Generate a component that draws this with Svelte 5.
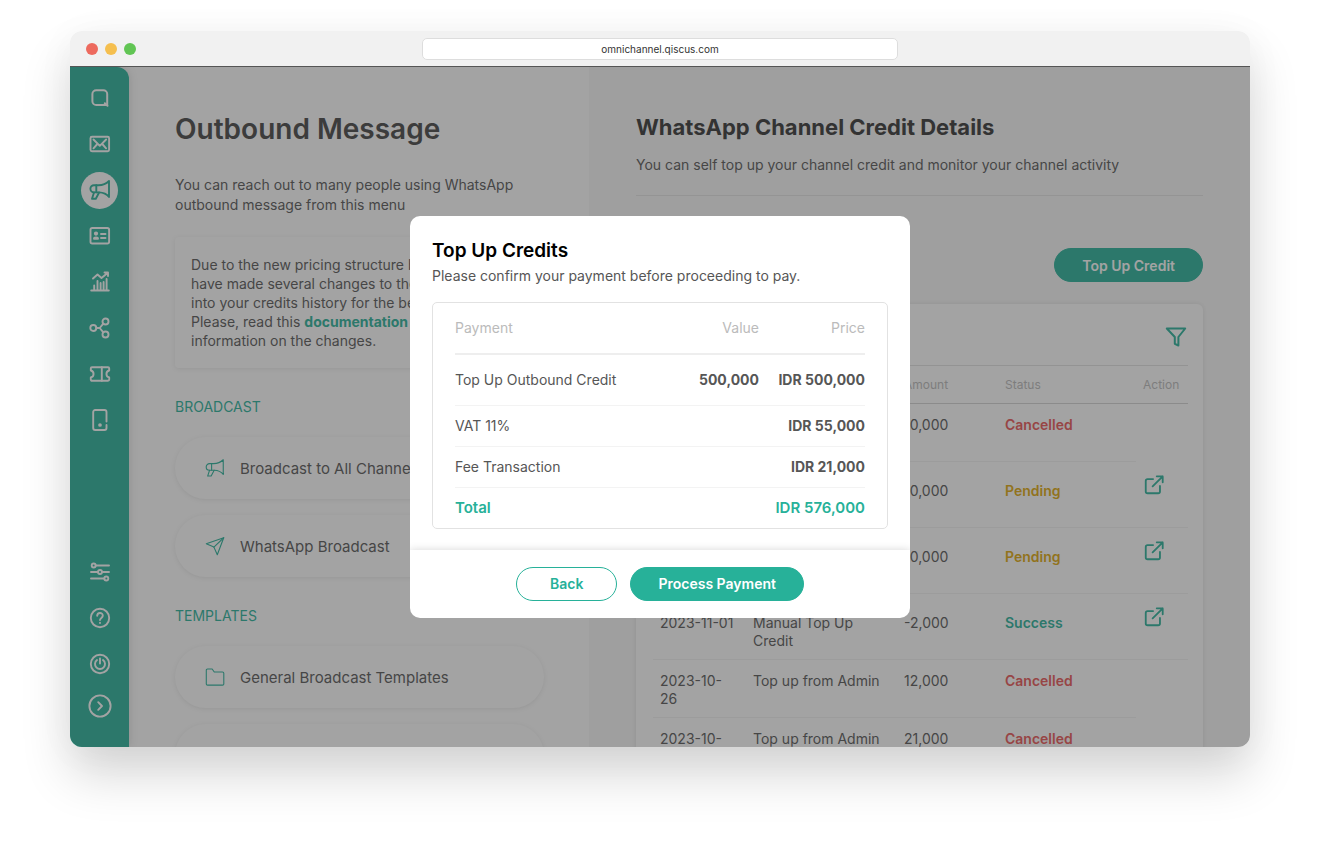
<script lang="ts">
	type Row = { date: string; type: string; amount: string; status: string; link: boolean };

	const topNav = ['logo', 'mail', 'horn', 'contact', 'chart', 'share', 'ticket', 'device'];
	const bottomNav = ['sliders', 'help', 'power', 'next'];

	const labels: Record<string, string> = {
		logo: 'Home',
		mail: 'Inbox',
		horn: 'Outbound message',
		contact: 'Contacts',
		chart: 'Analytics',
		share: 'Integration',
		ticket: 'Tickets',
		device: 'Devices',
		sliders: 'Settings',
		help: 'Help',
		power: 'Log out',
		next: 'Expand'
	};

	const rows: Row[] = [
		{ date: '2023-11-05', type: 'Top Up', amount: '10,000', status: 'Cancelled', link: false },
		{ date: '2023-11-03', type: 'Top Up', amount: '10,000', status: 'Pending', link: true },
		{ date: '2023-11-02', type: 'Top Up', amount: '10,000', status: 'Pending', link: true },
		{ date: '2023-11-01', type: 'Manual Top Up Credit', amount: '-2,000', status: 'Success', link: true },
		{ date: '2023-10-26', type: 'Top up from Admin', amount: '12,000', status: 'Cancelled', link: false },
		{ date: '2023-10-25', type: 'Top up from Admin', amount: '21,000', status: 'Cancelled', link: false }
	];

	const payments = [
		{ name: 'Top Up Outbound Credit', value: '500,000', price: 'IDR 500,000' },
		{ name: 'VAT 11%', value: '', price: 'IDR 55,000' },
		{ name: 'Fee Transaction', value: '', price: 'IDR 21,000' }
	];
</script>

{#snippet icon(name: string, size = 24, stroke = 1.9)}
	<svg
		width={size}
		height={size}
		viewBox="0 0 24 24"
		fill="none"
		stroke="currentColor"
		stroke-width={stroke}
		stroke-linecap="round"
		stroke-linejoin="round"
		aria-hidden="true"
	>
		{#if name === 'logo'}
			<path d="M8.200 4.300h7.200a3.800 3.800 0 0 1 3.800 3.800v10.900H8.200a3.800 3.800 0 0 1-3.800-3.800V8.100a3.800 3.800 0 0 1 3.800-3.800z" stroke-width="2" />
			<path d="M16.800 17.200l2.700 2.500" stroke-width="2" />
		{:else if name === 'mail'}
			<rect x="2.500" y="4.700" width="18.600" height="14.600" rx="1.5" />
			<path d="M5.500 7.500l6.300 6.300 6.300-6.300M5.500 16.300l3.400-3.800M18.100 16.300l-3.400-3.800" />
		{:else if name === 'horn'}
			<path d="M21 3v16c-3-3.8-6.400-4.500-9.800-4.600H6a3.200 3.200 0 0 1 0-7.200h4.500C14.500 7.200 18 6 21 3z" />
			<path d="M8.300 7.300v7M6 14.500L4 20.800h3.800l3.300-6.300" />
		{:else if name === 'contact'}
			<rect x="2.500" y="4" width="18.600" height="15.500" rx="1.800" />
			<circle cx="8" cy="9.600" r="1.200" fill="currentColor" />
			<path d="M6 14.800c0-1.800 4-1.800 4 0z" fill="currentColor" />
			<path d="M13 10h4.500M13 14h4.500" />
		{:else if name === 'chart'}
			<path d="M3.200 20.500h17.600M6.200 20v-4.500M9.500 20v-9M12.600 20v-7M15.600 20v-8M18.600 20V9" />
			<path d="M5 8.500l4.500-4 4 3.500 6-5M16.500 2.500H20V6" />
		{:else if name === 'share'}
			<circle cx="5.300" cy="12" r="3" />
			<circle cx="17.500" cy="5.500" r="3" />
			<circle cx="17.500" cy="18.500" r="3" />
			<path d="M8.300 12h3.400l3.600-4.300M11.700 12l3.600 4.300" />
		{:else if name === 'ticket'}
			<path d="M4 5.200h16c.7 0 1.200.5 1.200 1.200v2.100a3.600 3.600 0 0 0 0 7v2.100c0 .7-.5 1.200-1.200 1.200H4c-.7 0-1.200-.5-1.200-1.200v-2.100a3.600 3.600 0 0 0 0-7V6.400c0-.7.5-1.200 1.200-1.200z" />
			<path d="M13.800 5.200v13.600" />
		{:else if name === 'device'}
			<path d="M18.500 13.500V4a2 2 0 0 0-2-2H7.200a2 2 0 0 0-2 2v16a2 2 0 0 0 2 2h9.300a2 2 0 0 0 2-2v-3" />
			<circle cx="12" cy="17" r=".9" fill="currentColor" />
		{:else if name === 'sliders'}
			<circle cx="5.700" cy="5.500" r="2" />
			<circle cx="12" cy="12" r="2" />
			<circle cx="18.300" cy="18.500" r="2" />
			<path d="M7.700 5.500H21M3 12h7M14 12h7M3 18.500h13.300" />
		{:else if name === 'help'}
			<circle cx="12" cy="12" r="9.200" />
			<path d="M9.200 9.800c0-3.800 5.600-3.800 5.600 0 0 2-2.800 2.200-2.800 4.200M12 16.800v.2" />
		{:else if name === 'power'}
			<circle cx="12" cy="12" r="9.200" />
			<path d="M12 6.500v5M9 8a5 5 0 1 0 6 0" />
		{:else if name === 'next'}
			<circle cx="12" cy="12" r="10.600" />
			<path d="M10.200 8.200L14 12l-3.800 3.800" />
		{:else if name === 'plane'}
			<path d="M2.500 9.500L21.500 3l-7 18.500-3.700-8.300z" />
			<path d="M10.800 13.200L21.500 3" />
		{:else if name === 'folder'}
			<path d="M2.500 4.700c0-.8.500-1.400 1.400-1.400h5l2.300 3.200h9c.8 0 1.400.5 1.400 1.400v11.600c0 .8-.6 1.400-1.400 1.400H3.900c-.9 0-1.400-.6-1.400-1.400z" />
		{:else if name === 'filter'}
			<path d="M2.800 3.500h18.400l-6.800 8.500v8.500l-3.600-1.700V12z" />
		{:else if name === 'open'}
			<path d="M11 5.500H5a2 2 0 0 0-2 2V19a2 2 0 0 0 2 2h11.500a2 2 0 0 0 2-2v-6" />
			<path d="M10.500 13.500L21.500 2.500M15 2.500h6.500V9" />
		{/if}
	</svg>
{/snippet}

<div class="page">
	<div class="window">
		<div class="chrome">
			<div class="dots"><i class="red"></i><i class="amber"></i><i class="green"></i></div>
			<input class="address" aria-label="Address" value="omnichannel.qiscus.com" />
		</div>

		<div class="screen">
			<div class="app">
				<nav class="sidebar">
					{#each topNav as item}
						<button class="nav" class:active={item === 'horn'} aria-label={labels[item]}>
							<span>{@render icon(item)}</span>
						</button>
					{/each}
					<div class="spacer"></div>
					{#each bottomNav as item}
						<button class="nav" class:last={item === 'next'} aria-label={labels[item]}>
							<span>{@render icon(item)}</span>
						</button>
					{/each}
				</nav>

				<section class="outbound">
					<h1>Outbound Message</h1>
					<p class="intro">
						You can reach out to many people using WhatsApp<br />outbound message from this menu
					</p>
					<p class="notice">
						Due to the new pricing structure by<br />have made several changes to the<br />
						into your credits history for the best<br />Please, read this
						<a href="#docs">documentation</a><br />information on the changes.
					</p>

					<h2>BROADCAST</h2>
					<a class="pill" href="#all">{@render icon('horn', 22, 1.2)}Broadcast to All Channel</a>
					<a class="pill" href="#wa">{@render icon('plane', 22, 1.2)}WhatsApp Broadcast</a>
					<h2>TEMPLATES</h2>
					<a class="pill" href="#general">{@render icon('folder', 22, 1.2)}General Broadcast Templates</a>
					<a class="pill" href="#other" aria-label="More templates"></a>
				</section>

				<main class="details">
					<h2>WhatsApp Channel Credit Details</h2>
					<p>You can self top up your channel credit and monitor your channel activity</p>
					<button class="btn topup">Top Up Credit</button>

					<div class="card">
						<div class="tools">
							<button class="plain" aria-label="Filter">{@render icon('filter', 24, 2)}</button>
						</div>
						<table class="history">
							<thead>
								<tr>
									<th class="date">Date</th>
									<th class="type">Type</th>
									<th class="amount">Amount</th>
									<th>Status</th>
									<th class="action">Action</th>
								</tr>
							</thead>
							<tbody>
								{#each rows as row}
									<tr class:tall={row.link}>
										<td>{row.date}</td>
										<td>{row.type}</td>
										<td>{row.amount}</td>
										<td class="status {row.status.toLowerCase()}">{row.status}</td>
										<td class="open">
											{#if row.link}
												<a href="#open" aria-label="Open">{@render icon('open', 22, 2)}</a>
											{/if}
										</td>
									</tr>
								{/each}
							</tbody>
						</table>
					</div>
				</main>
			</div>

			<div class="backdrop">
				<div class="modal" role="dialog" aria-labelledby="modal-title">
					<div class="modal-body">
						<h3 id="modal-title">Top Up Credits</h3>
						<p>Please confirm your payment before proceeding to pay.</p>
						<div class="bill">
							<table>
								<thead>
									<tr><th>Payment</th><th>Value</th><th>Price</th></tr>
								</thead>
								<tbody>
									{#each payments as item}
										<tr>
											<td>{item.name}</td>
											<td>{item.value}</td>
											<td>{item.price}</td>
										</tr>
									{/each}
								</tbody>
								<tfoot>
									<tr><td>Total</td><td></td><td>IDR 576,000</td></tr>
								</tfoot>
							</table>
						</div>
					</div>
					<div class="modal-footer">
						<button class="btn outline">Back</button>
						<button class="btn">Process Payment</button>
					</div>
				</div>
			</div>
		</div>
	</div>
</div>

<style>
	:global(body) {
		margin: 0;
		background: #fff;
	}

	.page {
		--green: #27b199;
		--text: #565656;

		display: flex;
		box-sizing: border-box;
		height: 100vh;
		padding: 31px 70px 109px;
		overflow: hidden;

		font-family: 'Inter', Arial, sans-serif;
		font-size: 14px;
		color: var(--text);
	}
	.page * {
		box-sizing: border-box;
	}

	h1,
	h2,
	h3,
	p {
		margin: 0;
	}
	button {
		font-family: inherit;
		cursor: pointer;
	}
	svg {
		display: block;
		flex: none;
	}

	.window {
		display: flex;
		flex-direction: column;
		flex: 1;
		min-width: 0;
		border-radius: 12px;
		overflow: hidden;
		box-shadow:
			0 28px 50px rgba(0, 0, 0, 0.16),
			0 4px 40px rgba(0, 0, 0, 0.04);
	}

	.chrome {
		display: grid;
		grid-template-columns: 1fr 476px 1fr;
		align-items: center;
		flex: none;
		height: 36px;
		padding: 0 16px;
		background: #f1f1f1;
		border-bottom: 1px solid #555;
	}
	.dots {
		display: flex;
		gap: 7px;
	}
	.dots i {
		width: 12px;
		height: 12px;
		border-radius: 50%;
	}
	.red {
		background: #ed6a5e;
	}
	.amber {
		background: #f5bf4f;
	}
	.green {
		background: #61c554;
	}
	.address {
		width: 100%;
		height: 22px;
		padding: 0;
		border: 1px solid #ddd;
		border-radius: 5px;
		background: #fff;
		text-align: center;
		font-family: inherit;
		font-size: 10px;
		color: #333;
	}

	.screen {
		display: grid;
		flex: 1;
		min-height: 0;
		background: #fff;
	}
	.app,
	.backdrop {
		grid-area: 1 / 1;
		min-height: 0;
	}
	.app {
		display: flex;
		overflow: hidden;
	}

	.sidebar {
		display: flex;
		flex-direction: column;
		align-items: center;
		flex: none;
		width: 59px;
		padding: 8px 0 22px;
		border-radius: 0 12px 0 0;
		background: var(--green);
		box-shadow: 0 0 10px rgba(0, 0, 0, 0.16);
	}
	.spacer {
		flex: 1;
	}
	.nav {
		display: grid;
		place-items: center;
		width: 46px;
		height: 46px;
		padding: 0;
		border: none;
		background: none;
		color: #fff;
	}
	.nav.last {
		height: 38px;
	}
	.nav span {
		display: grid;
		place-items: center;
		width: 37px;
		height: 37px;
		border-radius: 50%;
	}
	.nav.active span {
		background: #fff;
		color: var(--green);
	}

	.outbound {
		flex: none;
		width: 460px;
		padding: 44px 45px 0 46px;
	}
	h1 {
		font-size: 28px;
		line-height: 36px;
		font-weight: 600;
		color: #444;
	}
	.intro {
		margin-top: 28px;
		line-height: 20px;
	}
	.notice {
		margin-top: 22px;
		padding: 18px 16px;
		line-height: 19px;
		white-space: nowrap;
		border-radius: 4px;
		box-shadow: 0 1px 5px rgba(0, 0, 0, 0.09);
	}
	.notice a {
		font-weight: 700;
		color: var(--green);
		text-decoration: none;
	}
	.outbound h2 {
		margin: 29px 0 20px;
		font-size: 14px;
		line-height: 20px;
		font-weight: 400;
		color: var(--green);
	}
	.pill {
		display: flex;
		align-items: center;
		gap: 14px;
		height: 62px;
		margin-bottom: 16px;
		padding: 0 29px;
		border-radius: 31px;
		box-shadow: 0 1px 5px rgba(0, 0, 0, 0.09);
		font-size: 15px;
		color: var(--text);
		text-decoration: none;
	}
	.pill svg {
		color: var(--green);
	}

	.details {
		flex: 1;
		min-width: 0;
		padding: 44px 47px 0;
		background: #f8f8f8;
	}
	.details h2 {
		font-size: 22px;
		line-height: 32px;
		font-weight: 700;
		color: #333;
	}
	.details p {
		padding: 12px 0 20px;
		line-height: 20px;
		border-bottom: 1px solid #e4e4e4;
	}

	.btn {
		height: 34px;
		padding: 0 27px;
		border: 1px solid var(--green);
		border-radius: 17px;
		background: var(--green);
		font-size: 14px;
		font-weight: 600;
		color: #fff;
	}
	.btn.outline {
		padding: 0 33px;
		background: #fff;
		color: var(--green);
	}
	.btn.topup {
		display: block;
		margin: 52px 0 22px auto;
	}
	.plain {
		padding: 0;
		border: none;
		background: none;
		color: var(--green);
	}

	.card {
		padding: 0 15px 0 17px;
		border-radius: 6px;
		background: #fff;
		box-shadow: 0 0 5px rgba(0, 0, 0, 0.1);
	}
	.tools {
		display: flex;
		justify-content: flex-end;
		align-items: center;
		height: 61px;
		padding-top: 4px;
	}

	.history {
		width: 100%;
		table-layout: fixed;
		border-collapse: separate;
		border-spacing: 0;
	}
	.history th {
		height: 39px;
		padding: 0 7px;
		border-top: 1px solid #e2e2e2;
		border-bottom: 1px solid #d4d4d4;
		text-align: left;
		font-size: 12px;
		font-weight: 400;
		color: #bbb;
	}
	.history .date {
		width: 93px;
	}
	.history .type {
		width: 151px;
	}
	.history .amount {
		width: 101px;
	}
	.history .action {
		width: 52px;
	}
	.history td {
		height: 58px;
		padding: 12px 9px 0 7px;
		border-bottom: 1px solid #f3f3f3;
		vertical-align: top;
		line-height: 18px;
	}
	.history tr:not(.tall) .open {
		border-bottom: none;
	}
	.history .tall td {
		height: 66px;
		padding-top: 20px;
	}
	.history .tall .open {
		padding-top: 12px;
	}
	.open a {
		color: var(--green);
	}
	.status {
		font-weight: 600;
	}
	.cancelled {
		color: #ea5455;
	}
	.pending {
		color: #e0a80c;
	}
	.success {
		color: var(--green);
	}

	.backdrop {
		display: flex;
		justify-content: center;
		align-items: center;
		padding-top: 19px;
		background: rgba(51, 51, 51, 0.45);
		z-index: 1;
	}
	.modal {
		width: 500px;
		border-radius: 10px;
		background: #fff;
		overflow: hidden;
	}
	.modal-body {
		padding: 22px 22px 21px;
	}
	.modal h3 {
		font-size: 19px;
		line-height: 25px;
		font-weight: 600;
		color: #000;
	}
	.modal p {
		margin-bottom: 14px;
		line-height: 25px;
	}
	.bill {
		padding: 0 22px;
		border: 1px solid #e2e2e2;
		border-radius: 5px;
	}
	.bill table {
		width: 100%;
		border-collapse: separate;
		border-spacing: 0;
	}
	.bill th,
	.bill td {
		height: 41px;
		padding: 0;
		text-align: right;
		border-bottom: 1px solid #f3f3f3;
	}
	.bill th {
		height: 52px;
		border-bottom: 2px solid #eee;
		font-weight: 400;
		color: #bbb;
	}
	.bill tbody tr:first-child td {
		height: 51px;
	}
	.bill td {
		font-weight: 700;
	}
	.bill th:first-child,
	.bill td:first-child {
		text-align: left;
	}
	.bill tbody td:first-child {
		font-weight: 400;
	}
	.bill th:last-child,
	.bill td:last-child {
		width: 106px;
	}
	.bill tfoot td {
		height: 40px;
		border-bottom: none;
		font-size: 15px;
		font-weight: 600;
		color: var(--green);
	}
	.modal-footer {
		display: flex;
		justify-content: center;
		gap: 13px;
		padding: 17px;
		box-shadow: 0 0 8px rgba(0, 0, 0, 0.16);
	}
</style>
